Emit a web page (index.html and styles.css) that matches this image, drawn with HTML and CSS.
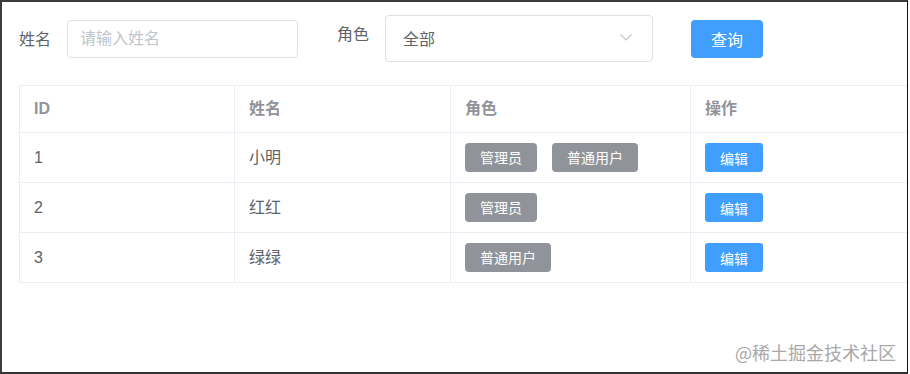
FILE: index.html
```html
<!DOCTYPE html>
<html lang="zh-CN">
<head>
<meta charset="utf-8">
<title>用户列表</title>
<link rel="stylesheet" href="styles.css">
</head>
<body>
<div class="frame">
  <div class="form">
    <label class="label label-name">姓名</label>
    <div class="input"><span class="placeholder">请输入姓名</span></div>
    <label class="label label-role">角色</label>
    <div class="select">
      <span class="select-value">全部</span>
      <svg class="chevron" width="12" height="7" viewBox="0 0 12 7"><path d="M0.5 0.5 L6 6 L11.5 0.5" fill="none" stroke="#c0c4cc" stroke-width="1.1"/></svg>
    </div>
    <button class="btn-query">查询</button>
  </div>

  <div class="table">
    <div class="cell head">ID</div>
    <div class="cell head">姓名</div>
    <div class="cell head">角色</div>
    <div class="cell head">操作</div>

    <div class="cell">1</div>
    <div class="cell">小明</div>
    <div class="cell tags"><span class="tag">管理员</span><span class="tag">普通用户</span></div>
    <div class="cell"><button class="btn-edit">编辑</button></div>

    <div class="cell">2</div>
    <div class="cell">红红</div>
    <div class="cell tags"><span class="tag">管理员</span></div>
    <div class="cell"><button class="btn-edit">编辑</button></div>

    <div class="cell">3</div>
    <div class="cell">绿绿</div>
    <div class="cell tags"><span class="tag">普通用户</span></div>
    <div class="cell"><button class="btn-edit">编辑</button></div>
  </div>

  <div class="watermark">@稀土掘金技术社区</div>
</div>
</body>
</html>
```

FILE: styles.css
```css
* { box-sizing: border-box; }
html, body { margin: 0; padding: 0; background: #fff; }
body {
  font-family: "Liberation Sans", "Noto Sans CJK SC", sans-serif;
  color: #606266;
}
.frame {
  position: relative;
  width: 908px;
  height: 374px;
  border-top: 2px solid #3c3c3c;
  border-left: 2px solid #3c3c3c;
  border-right: 1px solid #111;
  border-bottom: 2px solid #333;
  overflow: hidden;
  background: #fff;
}
.form {
  display: flex;
  align-items: center;
  height: 47px;
  margin-top: 13px;
  padding-left: 17px;
}
.label {
  font-size: 16px;
  color: #606266;
  line-height: 20px;
  margin-right: 16px;
  white-space: nowrap;
}
.label-name { margin-top: 3px; }
.label-role {
  align-self: flex-start;
  line-height: 40px;
  margin-left: 39px;
}
.input {
  width: 231px;
  height: 38px;
  border: 1px solid #dcdfe6;
  border-radius: 4px;
  padding-left: 12px;
  display: flex;
  align-items: center;
}
.placeholder {
  font-size: 16px;
  color: #c0c4cc;
  line-height: 20px;
}
.select {
  width: 268px;
  height: 47px;
  border: 1px solid #dcdfe6;
  border-radius: 4px;
  padding: 0 20px 0 17px;
  display: flex;
  align-items: center;
  justify-content: space-between;
}
.select-value {
  font-size: 16px;
  color: #606266;
  line-height: 20px;
  margin-top: 3px;
}
.chevron { margin-top: -2px; }
.btn-query {
  margin-left: 38px;
  width: 72px;
  height: 38px;
  border: none;
  border-radius: 4px;
  background: #409eff;
  color: #fff;
  font-family: inherit;
  font-size: 16px;
  padding: 0;
}
.table {
  display: grid;
  grid-template-columns: 215px 216px 240px 260px;
  grid-template-rows: 47px 50px 50px 50px;
  margin-top: 23px;
  margin-left: 17px;
  width: max-content;
  border-top: 1px solid #ebeef5;
  border-left: 1px solid #ebeef5;
}
.cell {
  border-right: 1px solid #ebeef5;
  border-bottom: 1px solid #ebeef5;
  padding-left: 14px;
  display: flex;
  align-items: center;
  font-size: 16px;
  color: #606266;
  line-height: 20px;
}
.head {
  font-weight: bold;
  color: #909399;
}
.tags { gap: 15px; }
.tag {
  display: inline-flex;
  align-items: center;
  height: 29px;
  padding: 0 15px;
  background: #909399;
  color: #fff;
  font-size: 14px;
  border-radius: 4px;
}
.btn-edit {
  width: 58px;
  height: 29px;
  border: none;
  border-radius: 3px;
  background: #409eff;
  color: #fff;
  font-family: inherit;
  font-size: 14px;
  padding: 0;
}
.watermark {
  position: absolute;
  right: 11px;
  bottom: 11px;
  font-size: 18px;
  line-height: 18px;
  color: #a8a8a8;
  font-family: "Noto Sans CJK SC", sans-serif;
}
```
